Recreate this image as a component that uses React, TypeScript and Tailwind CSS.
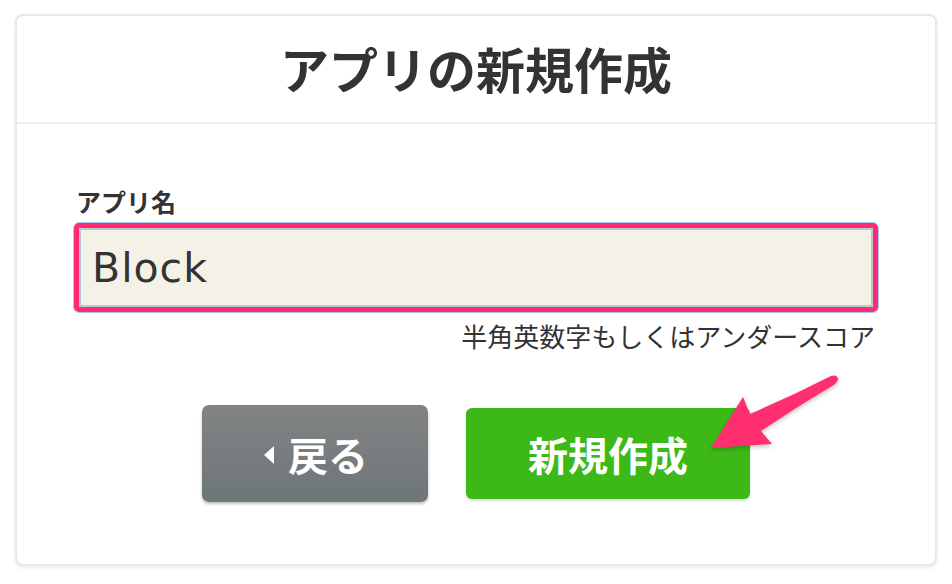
import React from 'react';

const jp = "font-['Noto_Sans_CJK_JP',sans-serif]";

const Arrow = () => (
  <svg className="absolute left-0 top-0 pointer-events-none" width="952" height="584" viewBox="0 0 952 584">
    <defs>
      <filter id="arrowShadow" x="-20%" y="-20%" width="140%" height="140%">
        <feDropShadow dx="0" dy="2" stdDeviation="2" floodColor="#000" floodOpacity="0.25" />
      </filter>
    </defs>
    <path
      d="M711 448 L743 397 L750 414 Q792 396 831 376 Q838 374 838 380 Q836 384 832 386 Q795 408 761 431 L772 444 Z"
      fill="#ff2d6e"
      filter="url(#arrowShadow)"
    />
  </svg>
);

export default function App() {
  return (
    <div className={`relative w-[952px] h-[584px] bg-white pt-[14px] px-[15px] ${jp}`}>
      <div className="h-[552px] rounded-[8px] border-2 border-[#e8e8e8] bg-white shadow-[0_2px_4px_rgba(0,0,0,0.08)] flex flex-col">
        {/* Header */}
        <div className="h-[108px] flex items-center justify-center border-b-2 border-[#ececec]">
          <h1 className="text-[49px] leading-none font-bold text-[#333] pb-[4px]">アプリの新規作成</h1>
        </div>

        {/* Form */}
        <div className="px-[56px] pt-[63px]">
          <label className="block text-[25px] leading-[28px] font-bold text-[#333] pl-[3px]">アプリ名</label>
          <div className="mt-[7px] rounded-[6px] border border-[#a9c9f2]">
            <div className="rounded-[5px] border-[5px] border-[#ff2d6e]">
              <div className="h-[79px] border-2 border-[#b9c7dc] bg-[#f4f2e6] flex items-center px-[11px]">
                <span className="font-['DejaVu_Sans',sans-serif] text-[41px] leading-none text-[#333] tracking-[1px] pt-[2px]">Block</span>
              </div>
            </div>
          </div>
          <p className="mt-[8px] text-right text-[26px] leading-[30px] text-[#333] pr-[4px]">半角英数字もしくはアンダースコア</p>

          {/* Buttons */}
          <div className="mt-[54px] flex items-center justify-center gap-[38px]">
            <button className="w-[226px] h-[97px] rounded-[7px] bg-gradient-to-b from-[#828383] to-[#6e767a] shadow-[0_2px_3px_rgba(0,0,0,0.25)] flex items-center justify-center text-white">
              <span className="w-0 h-0 border-y-[9px] border-y-transparent border-r-[10px] border-r-white mr-[14px] mt-[2px] ml-[2px]" />
              <span className="text-[40px] leading-none font-bold">戻る</span>
            </button>
            <button className="w-[284px] h-[91px] rounded-[6px] bg-[#3cb917] shadow-[0_2px_3px_rgba(0,0,0,0.15)] flex items-center justify-center text-white">
              <span className="text-[40px] leading-none font-bold">新規作成</span>
            </button>
          </div>
        </div>
      </div>
      <Arrow />
    </div>
  );
}
